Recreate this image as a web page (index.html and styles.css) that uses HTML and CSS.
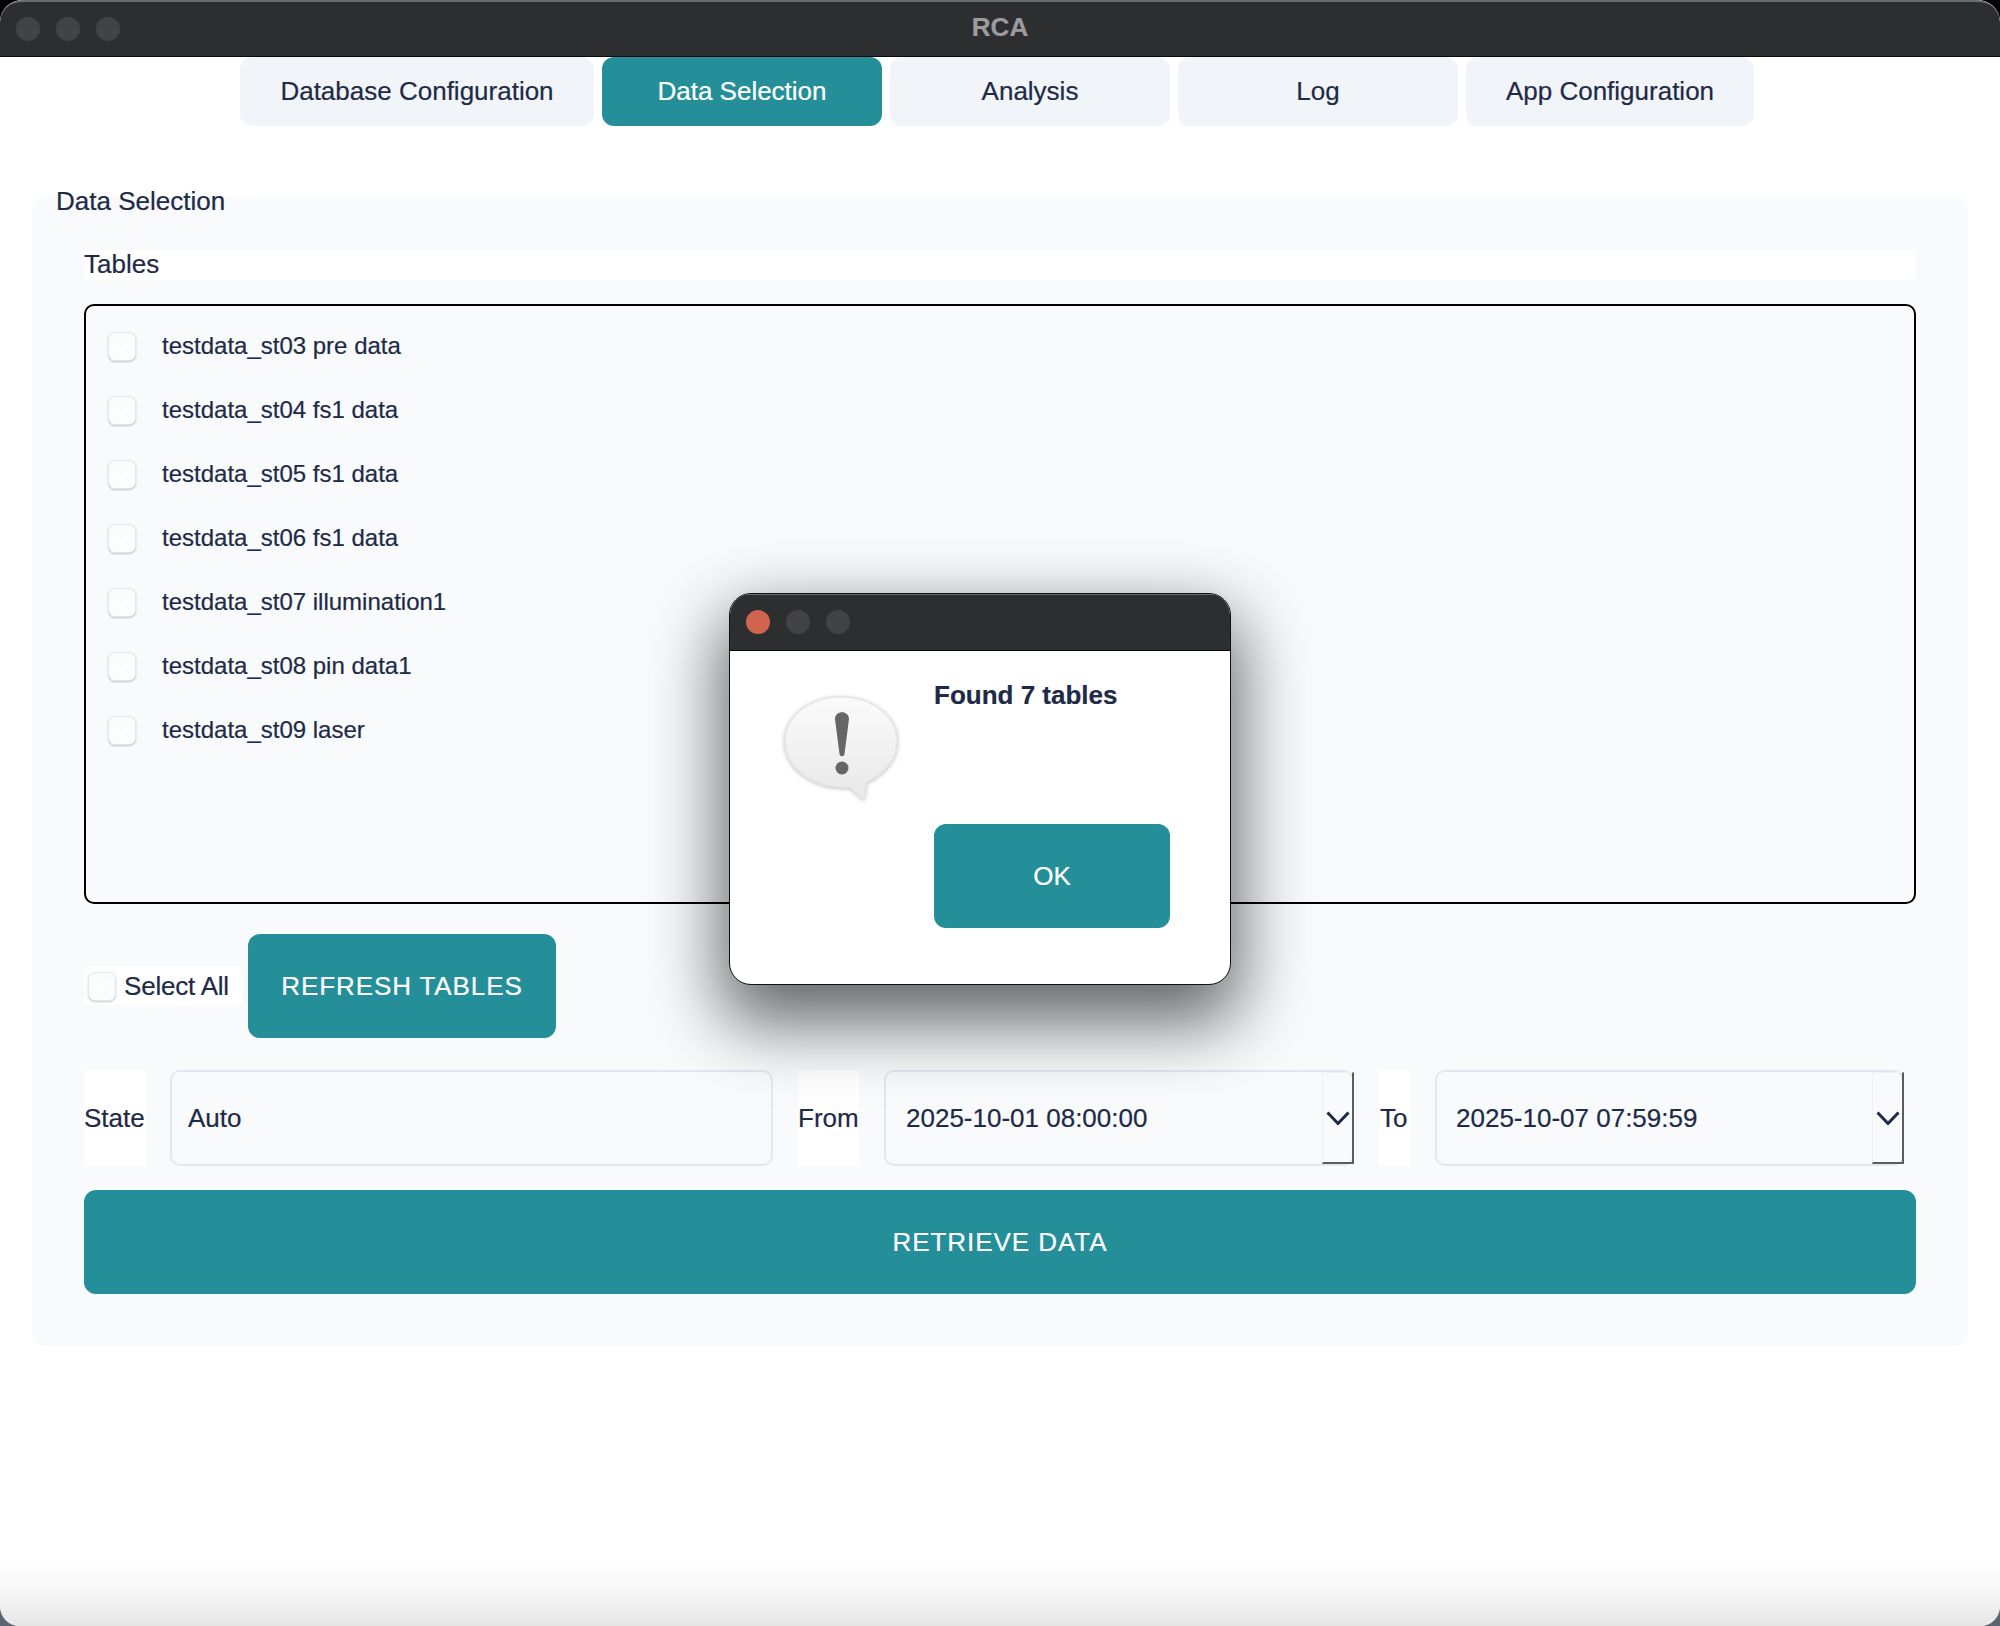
FILE: index.html
```html
<!DOCTYPE html>
<html lang="en">
<head>
<meta charset="utf-8">
<title>RCA</title>
<link rel="stylesheet" href="styles.css">
</head>
<body>
<div class="window">
  <header class="titlebar">
    <div class="lights"><i class="light"></i><i class="light"></i><i class="light"></i></div>
    <span class="title">RCA</span>
  </header>
  <nav class="tabs">
    <div class="tab tab-db">Database Configuration</div>
    <div class="tab active">Data Selection</div>
    <div class="tab">Analysis</div>
    <div class="tab">Log</div>
    <div class="tab tab-app">App Configuration</div>
  </nav>
  <main class="panel">
    <div class="panel-title">Data Selection</div>
    <div class="section-title">Tables</div>
    <div class="list">
      <label class="row"><span class="check"><svg viewBox="0 0 28 28"><path d="M8 15l4 5 8-11"/></svg></span>testdata_st03 pre data</label>
      <label class="row"><span class="check"><svg viewBox="0 0 28 28"><path d="M8 15l4 5 8-11"/></svg></span>testdata_st04 fs1 data</label>
      <label class="row"><span class="check"><svg viewBox="0 0 28 28"><path d="M8 15l4 5 8-11"/></svg></span>testdata_st05 fs1 data</label>
      <label class="row"><span class="check"><svg viewBox="0 0 28 28"><path d="M8 15l4 5 8-11"/></svg></span>testdata_st06 fs1 data</label>
      <label class="row"><span class="check"><svg viewBox="0 0 28 28"><path d="M8 15l4 5 8-11"/></svg></span>testdata_st07 illumination1</label>
      <label class="row"><span class="check"><svg viewBox="0 0 28 28"><path d="M8 15l4 5 8-11"/></svg></span>testdata_st08 pin data1</label>
      <label class="row"><span class="check"><svg viewBox="0 0 28 28"><path d="M8 15l4 5 8-11"/></svg></span>testdata_st09 laser</label>
    </div>
    <div class="actions">
      <label class="select-all"><span class="check"><svg viewBox="0 0 28 28"><path d="M8 15l4 5 8-11"/></svg></span>Select All</label>
      <button class="btn btn-refresh">REFRESH TABLES</button>
    </div>
    <div class="filters">
      <span class="field-label">State</span>
      <div class="field state">Auto</div>
      <span class="field-label">From</span>
      <div class="field date">
        <span class="date-text">2025-10-01 08:00:00</span>
        <span class="arrow"><svg viewBox="0 0 24 14"><path d="M1.500 1.500L12 12.500 22.500 1.500"/></svg></span>
      </div>
      <span class="field-label to-label">To</span>
      <div class="field date to-date">
        <span class="date-text">2025-10-07 07:59:59</span>
        <span class="arrow"><svg viewBox="0 0 24 14"><path d="M1.500 1.500L12 12.500 22.500 1.500"/></svg></span>
      </div>
    </div>
    <button class="btn btn-retrieve">RETRIEVE DATA</button>
  </main>

  <div class="dialog">
    <div class="dialog-bar">
      <i class="light close"></i><i class="light"></i><i class="light"></i>
    </div>
    <div class="dialog-body">
      <svg class="alert-icon" viewBox="0 0 124 112">
        <defs>
          <linearGradient id="bubble" x1="0" y1="0" x2="0" y2="1">
            <stop offset="0" stop-color="#fbfbfb"/>
            <stop offset="1" stop-color="#e8e8e8"/>
          </linearGradient>
        </defs>
        <path class="bubble" d="M62 6C31 6 6 25 6 50c0 25 24 44 54 46 4 .2 8 .5 11 0l14 12 2-17C107 82 118 67 118 50 118 25 93 6 62 6z"/>
        <path class="mark" d="M56 28c0-9 14-9 14 0l-4.500 35c-.3 3-4.700 3-5 0z"/>
        <circle class="mark" cx="63" cy="77" r="6.500"/>
      </svg>
      <div class="dialog-main">
        <div class="dialog-msg">Found 7 tables</div>
        <button class="btn btn-ok">OK</button>
      </div>
    </div>
  </div>
</div>
</body>
</html>
```
FILE: styles.css
```css
* { box-sizing: border-box; }
html, body { margin: 0; padding: 0; }
html { background: linear-gradient(#000 0%, #1c2228 50%, #5b6670 100%); }
body { width: 2000px; height: 1626px; font-family: "Liberation Sans", Arial, sans-serif; color: #1e2a47; font-size: 26px; -webkit-text-stroke: .2px; }

.window {
  position: relative;
  width: 2000px;
  height: 1626px;
  background: #fff;
  border-radius: 22px 22px 20px 20px;
  overflow: hidden;
}
.window::after {
  content: "";
  position: absolute;
  left: 0; right: 0; bottom: 0;
  height: 72px;
  background: linear-gradient(rgba(230,230,230,0) 0%, rgba(230,230,230,.25) 45%, rgba(230,230,230,1) 100%);
  pointer-events: none;
}

.titlebar {
  position: relative;
  height: 57px;
  padding-bottom: 3px;
  display: flex;
  align-items: center;
  justify-content: center;
  background: #2d2e30;
  border-top: 2px solid #6a6b6d;
  border-bottom: 1px solid #0a0a0a;
  border-radius: 22px 22px 0 0;
}
.lights { position: absolute; left: 16px; top: 15px; display: flex; gap: 16px; }
.light { display: block; width: 24px; height: 24px; border-radius: 50%; background: #424346; }
.title { font-weight: 700; font-size: 26px; color: #9c9c9e; }

.tabs { display: flex; justify-content: flex-start; gap: 8px; padding-left: 240px; height: 69px; }
.tab {
  width: 280px;
  display: flex; align-items: center; justify-content: center;
  background: #f1f5f9;
  border-radius: 12px;
  white-space: nowrap;
}
.tab-db { width: 354px; }
.tab-app { width: 288px; }
.tab.active { background: #248f99; color: #fff; }

.panel {
  display: flow-root;
  margin: 71px 32px 0;
  padding: 0 52px 52px;
  background: #f8fafc;
  border-radius: 12px;
}
.panel-title { margin: -7px 0 0 -28px; height: 60px; line-height: 23px; }
.section-title { height: 30px; line-height: 29px; background: #fff; }

.list {
  margin-top: 24px;
  height: 600px;
  border: 2px solid #000;
  border-radius: 10px;
  padding: 8px 0 0 22px;
  display: flex;
  flex-direction: column;
}
.row { height: 64px; display: flex; align-items: center; gap: 26px; font-size: 24px; }
.check {
  flex: none;
  width: 28px; height: 29px;
  background: #fbfcfd;
  border: 1px solid #e2e8f0;
  border-radius: 7px;
  box-shadow: 0 1px 2px rgba(0,0,0,.22);
}
.check svg { display: block; width: 100%; height: 100%; }
.check path { fill: none; stroke: #fff; stroke-width: 4; stroke-linecap: round; stroke-linejoin: round; }

.actions { margin-top: 30px; height: 104px; display: flex; align-items: center; gap: 6px; }
.select-all {
  width: 158px; height: 38px;
  padding-left: 4px;
  display: flex; align-items: center; gap: 8px;
  background: #fff;
  letter-spacing: -.2px;
}
.btn {
  display: block;
  border: 0;
  border-radius: 12px;
  background: #248f99;
  color: #fff;
  font: inherit;
  padding: 0;
}
.btn-refresh { width: 308px; height: 104px; letter-spacing: .9px; }

.filters {
  margin-top: 32px;
  height: 96px;
  display: grid;
  grid-template-columns: 62px 602px 61px 470px 31px 469px;
  column-gap: 25px;
}
.field-label { display: flex; align-items: center; background: #fff; white-space: nowrap; }
.to-label { padding-left: 1px; }
.field {
  display: flex; align-items: center;
  background: #f8fafc;
  border: 2px solid #e2e8f0;
  border-radius: 10px;
}
.state { margin-left: -1px; padding-left: 16px; }
.date-text { flex: 1; padding-left: 20px; white-space: nowrap; }
.to-date .date-text { padding-left: 19px; }
.arrow {
  align-self: stretch;
  width: 32px;
  margin-right: -2px;
  display: flex; align-items: center; justify-content: center;
  border-left: 1px solid #f0f2f6;
  border-top: 1px solid #f0f2f6;
  border-right: 2px solid #5a5c60;
  border-bottom: 2px solid #5a5c60;
}
.arrow svg { width: 24px; height: 14px; display: block; }
.arrow path { fill: none; stroke: #1e2a47; stroke-width: 3; }

.btn-retrieve { margin-top: 24px; width: 100%; height: 104px; letter-spacing: .95px; }

.dialog {
  position: absolute;
  left: 729px; top: 593px;
  width: 502px; height: 392px;
  background: #fff;
  border: 1px solid #111;
  border-radius: 22px;
  box-shadow: 0 30px 70px 8px rgba(0,0,0,.6);
  overflow: hidden;
}
.dialog-bar {
  height: 57px;
  padding: 15px 0 0 16px;
  display: flex; gap: 16px;
  background: #2d2e30;
  border-top: 1px solid #6a6b6d;
  border-bottom: 1px solid #0a0a0a;
}
.light.close { background: #d0644f; }
.dialog-body { display: flex; padding: 29px 0 0 52px; }
.alert-icon { width: 124px; height: 112px; margin: 11px 0 0 -3px; flex: none; filter: drop-shadow(0 1px 2px rgba(0,0,0,.25)); }
.bubble { fill: url(#bubble); stroke: #e6e6e6; stroke-width: 1.500; }
.mark { fill: #666; }
.dialog-main { margin-left: 31px; }
.dialog-msg { font-weight: 700; height: 30px; line-height: 30px; white-space: nowrap; }
.btn-ok { margin-top: 114px; width: 236px; height: 104px; }
```
